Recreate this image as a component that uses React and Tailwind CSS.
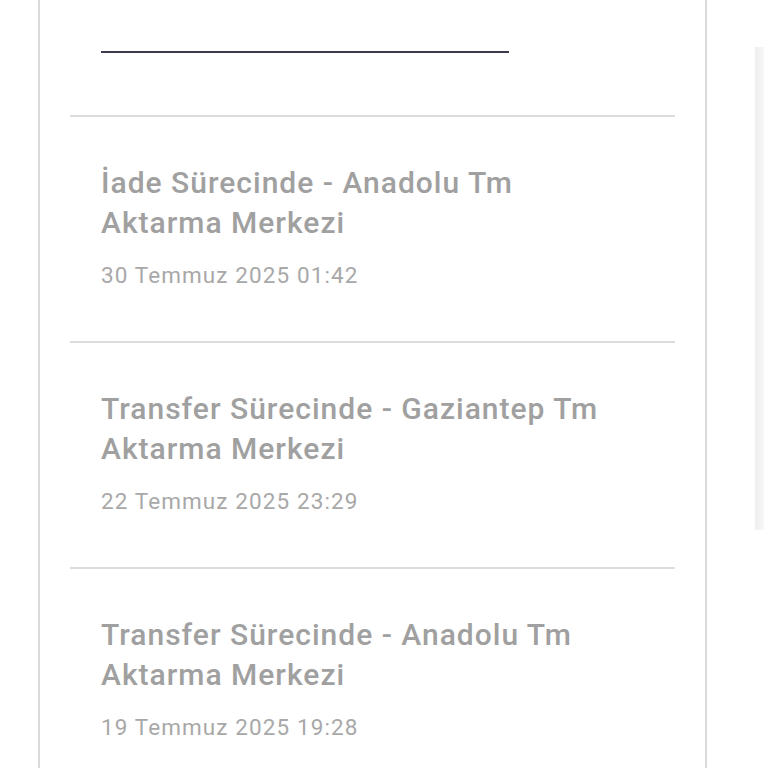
import React from "react";

const items = [
  { title: ["İade Sürecinde - Anadolu Tm", "Aktarma Merkezi"], date: "30 Temmuz 2025 01:42" },
  { title: ["Transfer Sürecinde - Gaziantep Tm", "Aktarma Merkezi"], date: "22 Temmuz 2025 23:29" },
  { title: ["Transfer Sürecinde - Anadolu Tm", "Aktarma Merkezi"], date: "19 Temmuz 2025 19:28" },
];

export default function App() {
  return (
    <div
      className="w-[768px] h-[768px] overflow-hidden bg-white flex"
      style={{ fontFamily: "Roboto, 'Noto Sans', sans-serif" }}
    >
      <div className="ml-[38px] w-[669px] h-full border-l-2 border-r-2 border-[#d9d9d9] shrink-0">
        <div className="pt-[51px] pl-[61px]">
          <div className="w-[408px] h-[2px] bg-[#3b3a4c]" />
        </div>
        <div className="mt-[62px]">
          {items.map((it, i) => (
            <div key={i} className="mx-[30px] border-t-2 border-[#dcdcdc] pt-[46px] pb-[51px] pl-[31px]">
              <div className="text-[30px] leading-[40px] tracking-[1px] font-medium text-[#a0a0a0]">
                {it.title.map((l, j) => (
                  <div key={j}>{l}</div>
                ))}
              </div>
              <div className="mt-[17px] text-[22.5px] leading-[30px] tracking-[1.1px] text-[#a8a8a8]">{it.date}</div>
            </div>
          ))}
        </div>
      </div>
      <div className="ml-[48px] mt-[47px] w-[9px] h-[483px] bg-gradient-to-r from-[#eeeeee] to-[#f8f8f8]" />
    </div>
  );
}
